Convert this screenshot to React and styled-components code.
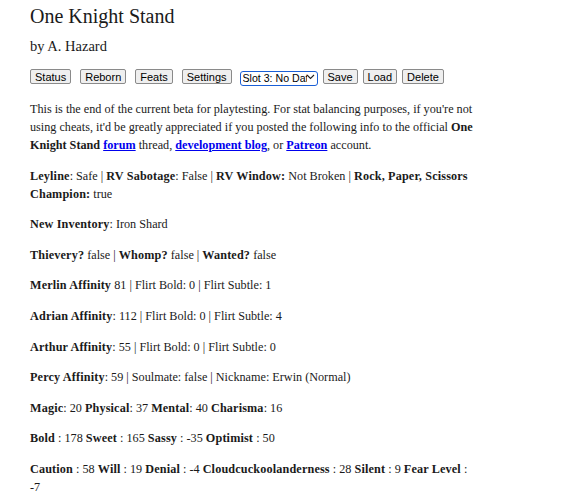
import React from "react";
import styled, { createGlobalStyle } from "styled-components";

const GlobalStyle = createGlobalStyle`
  body {
    margin: 0;
    background: #ffffff;
    color: #1a1a1a;
    font-family: "Liberation Serif", "DejaVu Serif", serif;
  }
`;

const stats = [
  [
    ["Leyline", ": Safe | "],
    ["RV Sabotage", ": False | "],
    ["RV Window:", " Not Broken | "],
    ["Rock, Paper, Scissors Champion:", " true"],
  ],
  [["New Inventory", ": Iron Shard"]],
  [
    ["Thievery?", " false | "],
    ["Whomp?", " false | "],
    ["Wanted?", " false"],
  ],
  [["Merlin Affinity", " 81 | Flirt Bold: 0 | Flirt Subtle: 1"]],
  [["Adrian Affinity", ": 112 | Flirt Bold: 0 | Flirt Subtle: 4"]],
  [["Arthur Affinity", ": 55 | Flirt Bold: 0 | Flirt Subtle: 0"]],
  [["Percy Affinity", ": 59 | Soulmate: false | Nickname: Erwin (Normal)"]],
  [
    ["Magic", ": 20 "],
    ["Physical", ": 37 "],
    ["Mental", ": 40 "],
    ["Charisma", ": 16"],
  ],
  [
    ["Bold", " : 178 "],
    ["Sweet", " : 165 "],
    ["Sassy", " : -35 "],
    ["Optimist", " : 50"],
  ],
  [
    ["Caution", " : 58 "],
    ["Will", " : 19 "],
    ["Denial", " : -4 "],
    ["Cloudcuckoolanderness", " : 28 "],
    ["Silent", " : 9 "],
    ["Fear Level", " : -7"],
  ],
];

export default function App() {
  return (
    <>
      <GlobalStyle />
      <Page>
        <Title>One Knight Stand</Title>
        <Byline>by A. Hazard</Byline>
        <Toolbar>
          <Group>
            <Button>Status</Button>
            <Button>Reborn</Button>
            <Button>Feats</Button>
            <Button>Settings</Button>
          </Group>
          <Group $tight>
            <SelectWrap>
              <Select defaultValue="3">
                <option value="3">Slot 3: No Data</option>
              </Select>
              <Chevron width="9" height="6" viewBox="0 0 9 6">
                <path d="M1 1l3.5 3.5L8 1" fill="none" stroke="#222" strokeWidth="1.1" />
              </Chevron>
            </SelectWrap>
            <Button>Save</Button>
            <Button>Load</Button>
            <Button>Delete</Button>
          </Group>
        </Toolbar>

        <Para>
          This is the end of the current beta for playtesting. For stat balancing
          purposes, if you're not using cheats, it'd be greatly appreciated if you
          posted the following info to the official <b>One Knight Stand</b>{" "}
          <StyledLink href="#">forum</StyledLink> thread,{" "}
          <StyledLink href="#">development blog</StyledLink>, or{" "}
          <StyledLink href="#">Patreon</StyledLink> account.
        </Para>

        {stats.map((row, i) => (
          <Para key={i}>
            {row.map(([label, value]) => (
              <React.Fragment key={label}>
                <Label>{label}</Label>
                {value}
              </React.Fragment>
            ))}
          </Para>
        ))}
      </Page>
    </>
  );
}

const Page = styled.div`
  padding: 4px 0 0 30px;
  max-width: 446px;
  font-size: 12.2px;
  line-height: 18px;
`;

const Title = styled.h1`
  font-size: 20px;
  font-weight: normal;
  margin: 0;
  line-height: 24px;
`;

const Byline = styled.p`
  font-size: 14.5px;
  margin: 8px 0 0;
  line-height: 20px;
`;

const Toolbar = styled.div`
  display: flex;
  align-items: center;
  gap: 8px;
  margin-top: 13px;
  margin-bottom: 16px;
`;

const Group = styled.div`
  display: flex;
  align-items: center;
  gap: ${(p) => (p.$tight ? "5px" : "9px")};
`;

const Button = styled.button`
  font-family: "Liberation Sans", Arial, sans-serif;
  font-size: 11px;
  line-height: 12px;
  height: 15px;
  padding: 0 4px;
  color: #000;
  background: #efefef;
  border: 1px solid #8a8a8a;
  border-radius: 2px;
`;

const SelectWrap = styled.div`
  position: relative;
  width: 78px;
  height: 15px;
`;

const Select = styled.select`
  appearance: none;
  width: 100%;
  height: 100%;
  box-sizing: border-box;
  padding: 0 10px 0 2px;
  font-family: "Liberation Sans", Arial, sans-serif;
  font-size: 10.6px;
  line-height: 12px;
  color: #000;
  background: #fff;
  border: 1.5px solid #1a5fd6;
  border-radius: 3px;
  outline: none;
`;

const Chevron = styled.svg`
  position: absolute;
  right: 3px;
  top: 5px;
  pointer-events: none;
`;

const Para = styled.p`
  margin: 0 0 12.6px;
`;

const Label = styled.b`
  letter-spacing: 0.15px;
`;

const StyledLink = styled.a`
  color: #0000ee;
  font-weight: bold;
  text-decoration: underline;
`;
